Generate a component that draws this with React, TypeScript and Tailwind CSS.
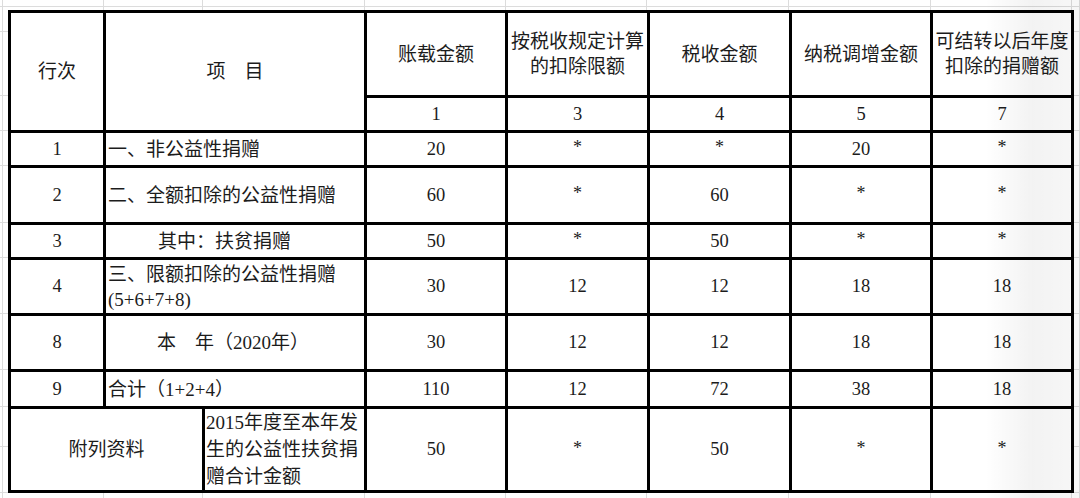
import React from "react";

const font = "font-['Liberation_Serif','Noto_Sans_CJK_SC',serif]";

const bgCols = [3, 101, 99, 162, 141, 141, 142, 142, 141, 8];
const bgRows = [7, 25, 64, 35, 35, 57, 35, 56, 56, 37, 40, 46];

const rows = [
    { no: "1", item: "一、非公益性捐赠", pad: "pl-[2px]", vals: ["20", "*", "*", "20", "*"] },
    { no: "2", item: "二、全额扣除的公益性捐赠", pad: "pl-[2px]", vals: ["60", "*", "60", "*", "*"] },
    { no: "3", item: "其中：扶贫捐赠", pad: "pl-[52px]", vals: ["50", "*", "50", "*", "*"] },
    { no: "4", item: "三、限额扣除的公益性捐赠", sub: "(5+6+7+8)", pad: "pl-[2px]", vals: ["30", "12", "12", "18", "18"] },
    { no: "8", item: "本　年（2020年）", pad: "pl-[51px]", vals: ["30", "12", "12", "18", "18"] },
    { no: "9", item: "合计（1+2+4）", pad: "pl-[2px]", vals: ["110", "12", "72", "38", "18"] }
];

const Cell = ({ children, className = "" }: { children?: React.ReactNode; className?: string }) => (
    <div className={`flex items-center bg-white ${className}`}>{children}</div>
);

const Value = ({ v }: { v: string }) => (
    <Cell className="justify-center text-[18.5px]">
        {v === "*" ? <span className="-translate-y-[2px] text-[18px]">*</span> : v}
    </Cell>
);

export default function App() {
    return (
        <div className={`relative h-[498px] w-[1080px] overflow-hidden bg-white text-[#1c1c1c] ${font}`}>
            {/* spreadsheet grid behind the table */}
            <div className="absolute inset-0 flex">
                {bgCols.map((w, i) => (
                    <div key={i} className="h-full shrink-0 border-r border-[#dcdcdc]" style={{ width: w }} />
                ))}
            </div>
            <div className="absolute inset-0 flex flex-col">
                {bgRows.map((h, i) => (
                    <div key={i} className="w-full shrink-0 border-b border-[#dcdcdc]" style={{ height: h }} />
                ))}
            </div>

            <div className="relative ml-[8px] mt-[10px] grid w-fit grid-cols-[92px_258px_138px_139px_139px_138px_138px] grid-rows-[82px_32px_32px_54px_32px_53px_53px_34px_81px] gap-[3px] bg-black p-[3px] text-[19px] leading-none">
                <Cell className="row-span-2 justify-center">行次</Cell>
                <Cell className="row-span-2 justify-center">项　目</Cell>
                <Cell className="justify-center">账载金额</Cell>
                <Cell className="justify-center text-center leading-[25px]">
                    按税收规定计算
                    <br />
                    的扣除限额
                </Cell>
                <Cell className="justify-center">税收金额</Cell>
                <Cell className="justify-center">纳税调增金额</Cell>
                <Cell className="justify-center text-center leading-[25px]">
                    可结转以后年度
                    <br />
                    扣除的捐赠额
                </Cell>
                {["1", "3", "4", "5", "7"].map((n) => (
                    <Value key={n} v={n} />
                ))}

                {rows.map((r) => (
                    <React.Fragment key={r.no}>
                        <Cell className="justify-center text-[18.5px]">{r.no}</Cell>
                        <Cell className={r.pad}>
                            {r.sub ? (
                                <div className="leading-[25px]">
                                    {r.item}
                                    <br />
                                    {r.sub}
                                </div>
                            ) : (
                                r.item
                            )}
                        </Cell>
                        {r.vals.map((v, i) => (
                            <Value key={i} v={v} />
                        ))}
                    </React.Fragment>
                ))}

                <div className="col-span-2 flex gap-[3px] bg-black">
                    <Cell className="w-[191px] shrink-0 justify-center">附列资料</Cell>
                    <Cell className="flex-1 pl-[1px] leading-[27px]">
                        <div>
                            2015年度至本年发
                            <br />
                            生的公益性扶贫捐
                            <br />
                            赠合计金额
                        </div>
                    </Cell>
                </div>
                {["50", "*", "50", "*", "*"].map((v, i) => (
                    <Value key={i} v={v} />
                ))}
            </div>

            {/* soft shading toward the right edge of the photo */}
            <div className="pointer-events-none absolute bottom-0 left-[985px] top-0 w-[95px] bg-gradient-to-r from-black/0 via-black/[0.05] to-black/[0.03]" />
        </div>
    );
}
